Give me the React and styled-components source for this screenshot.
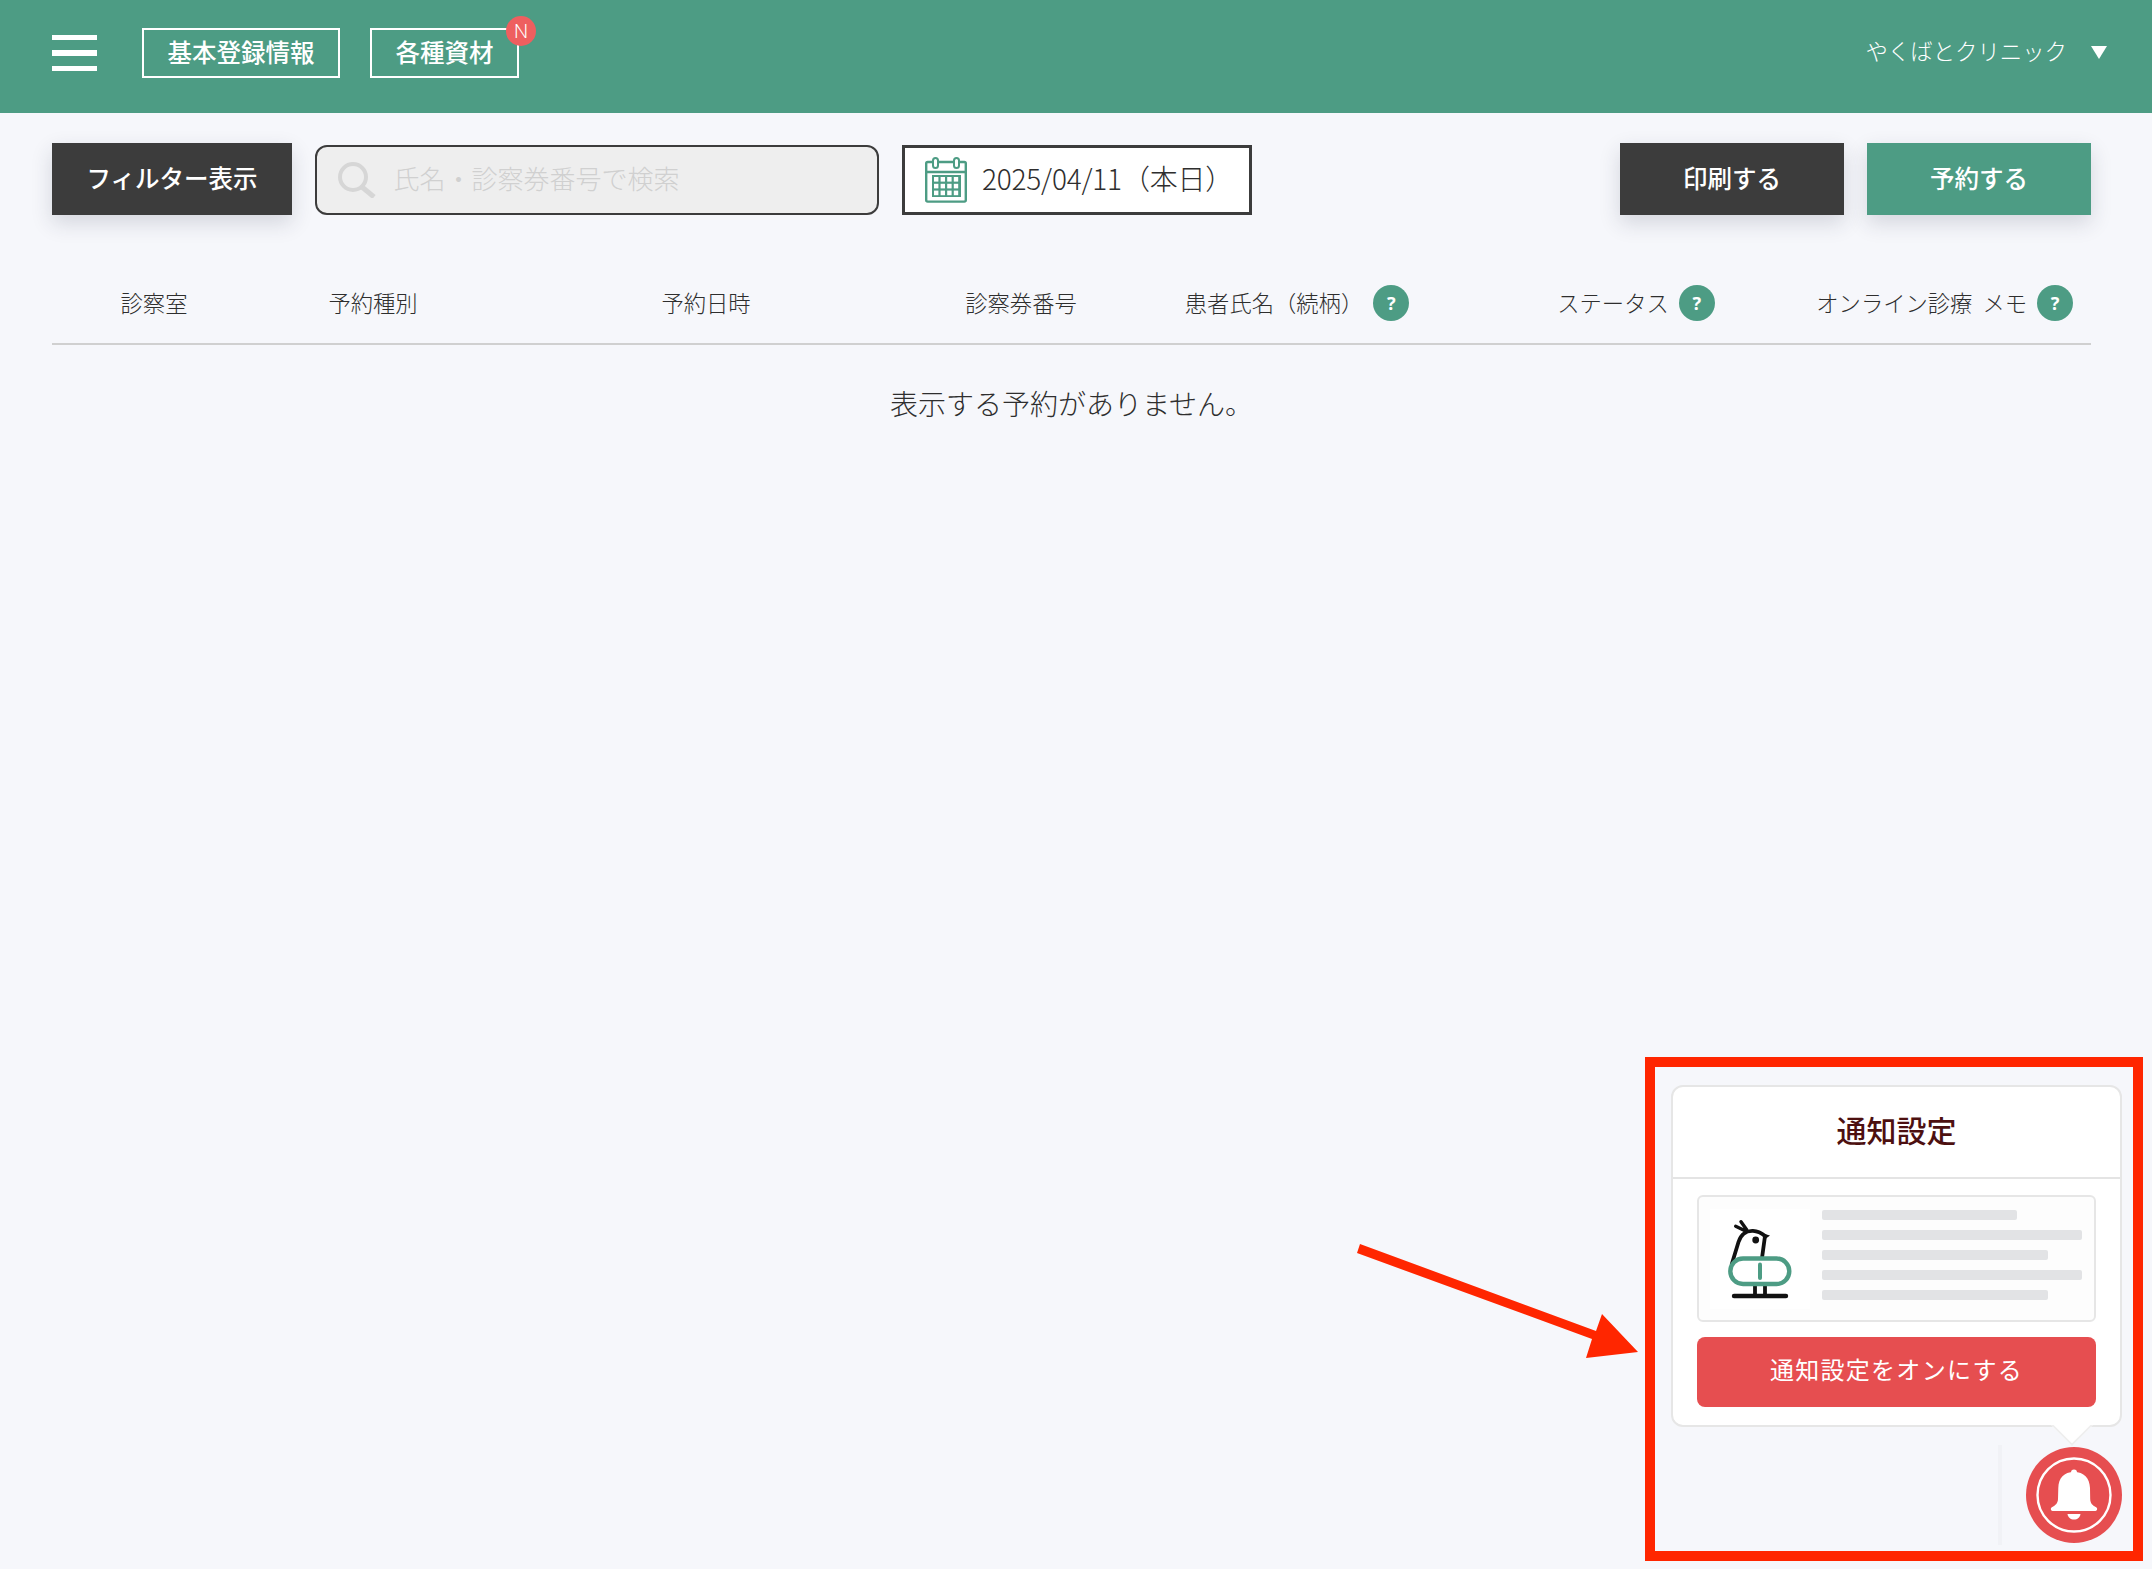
import React from 'react'
import styled, { createGlobalStyle } from 'styled-components'

const GREEN = '#4d9c84'
const DARK = '#3c3c3c'
const INK = '#2e2e2e'
const RED = '#e64e50'

const GlobalStyle = createGlobalStyle`
  * { box-sizing: border-box; }
  html, body { margin: 0; padding: 0; }
  body {
    background: #f6f7fb;
    color: ${INK};
    font-family: "Noto Sans CJK JP", "Noto Sans", sans-serif;
  }
`

const Page = styled.div`
  position: relative;
  min-height: 1569px;
  overflow: hidden;
`

const Header = styled.header`
  display: flex;
  align-items: center;
  height: 113px;
  padding: 0 45px 7px 52px;
  background: ${GREEN};
  color: #fff;
`

const Burger = styled.button`
  display: flex;
  flex-direction: column;
  gap: 10px;
  width: 45px;
  margin-right: 45px;
  padding: 0;
  border: 0;
  background: none;
  span {
    display: block;
    height: 5.5px;
    background: #fff;
  }
`

const NavButton = styled.button`
  position: relative;
  height: 50px;
  margin-right: 30px;
  padding: 0 23.5px 3px;
  border: 2px solid #fff;
  background: none;
  color: #fff;
  font: 500 24.5px "Noto Sans CJK JP", sans-serif;
`

const NewBadge = styled.span`
  position: absolute;
  top: -14px;
  right: -19px;
  width: 30px;
  height: 30px;
  border-radius: 50%;
  background: #ee5f5f;
  color: #fff;
  font: 300 20px/30px "Noto Sans", sans-serif;
  text-align: center;
`

const ClinicMenu = styled.div`
  display: flex;
  align-items: center;
  gap: 24px;
  margin-top: -2px;
  margin-left: auto;
  font-size: 22.4px;
  font-weight: 300;
  line-height: 30px;
`

const ClinicName = styled.span`
  margin-bottom: 4px;
`

const Caret = styled.span`
  width: 0;
  height: 0;
  border-top: 13px solid #fff;
  border-left: 8.5px solid transparent;
  border-right: 8.5px solid transparent;
`

const Toolbar = styled.div`
  display: flex;
  align-items: flex-end;
  height: 102px;
  padding: 0 61px 0 52px;
`

const ActionButton = styled.button`
  width: ${p => p.$width}px;
  height: 72px;
  margin-right: ${p => p.$gap || 0}px;
  padding: 0 0 4px;
  border: 0;
  background: ${p => p.$bg};
  box-shadow: 0 8px 20px rgba(40, 45, 70, 0.16);
  color: #fff;
  font: 500 24.5px "Noto Sans CJK JP", sans-serif;
`

const SearchBox = styled.label`
  display: flex;
  align-items: center;
  gap: 16.5px;
  width: 564px;
  height: 70px;
  margin-right: 23px;
  padding: 0 20px;
  border: 2.5px solid ${DARK};
  border-radius: 12px;
  background: #eeeeee;
`

const SearchInput = styled.input`
  flex: 1;
  min-width: 0;
  margin-bottom: 5px;
  padding: 0;
  border: 0;
  outline: 0;
  background: none;
  font: 300 26px "Noto Sans CJK JP", sans-serif;
  &::placeholder { color: #d0d0d0; opacity: 1; }
`

const DateBox = styled.div`
  display: flex;
  align-items: center;
  gap: 15px;
  width: 350px;
  height: 70px;
  padding: 0 0 0 20px;
  border: 3px solid ${DARK};
  background: #fff;
  font-size: 28px;
  font-weight: 300;
`

const DateText = styled.span`
  margin-bottom: 5px;
  letter-spacing: -0.2px;
`

const ToolbarRight = styled.div`
  display: flex;
  margin-left: auto;
`

const TableHead = styled.div`
  display: grid;
  grid-template-columns: 204px 234px 432px 198px 354px 324px 293px;
  align-items: center;
  height: 130px;
  margin: 0 61px 0 52px;
  padding-top: 70px;
  padding-bottom: 22px;
  border-bottom: 2px solid #d0d0d0;
  font-size: 22.3px;
  font-weight: 300;
`

const HeadCell = styled.div`
  display: flex;
  align-items: center;
  justify-content: ${p => (p.$end ? 'flex-end' : 'center')};
  gap: 10px;
  padding-right: ${p => (p.$end ? 18 : 0)}px;
  white-space: nowrap;
`

const HeadLabel = styled.span`
  margin-bottom: 3px;
  line-height: 32px;
`

const HelpDot = styled.span`
  flex: none;
  width: 36px;
  height: 36px;
  border-radius: 50%;
  background: ${GREEN};
  color: #fff;
  font: 700 18px/36px "Noto Sans", sans-serif;
  text-align: center;
`

const EmptyMessage = styled.p`
  margin: 40px 61px 0 52px;
  font-size: 28px;
  font-weight: 300;
  line-height: 36px;
  text-align: center;
`

/* notification panel floating over the page */
const Dock = styled.div`
  position: absolute;
  right: 30px;
  bottom: 24px;
  display: flex;
  flex-direction: column;
  align-items: flex-end;
  gap: 18px;
  width: 451px;
`

const Card = styled.section`
  position: relative;
  width: 100%;
  height: 342px;
  padding-bottom: 20px;
  border: 2px solid #e6e6e6;
  border-radius: 12px;
  background: #fff;
  &::after {
    content: '';
    position: absolute;
    right: 33px;
    bottom: -15px;
    width: 28px;
    height: 28px;
    background: #fff;
    border-right: 2px solid #eeeeee;
    border-bottom: 2px solid #eeeeee;
    transform: rotate(45deg);
    clip-path: polygon(100% 0, 100% 100%, 0 100%);
  }
`

const CardTitle = styled.h2`
  height: 92px;
  margin: 0;
  border-bottom: 2px solid #e4e4e4;
  color: #4d1010;
  font-size: 30px;
  font-weight: 500;
  line-height: 84px;
  text-align: center;
`

const CardBody = styled.div`
  display: flex;
  flex-direction: column;
  gap: 15px;
  padding: 16px 24px 0;
`

const Preview = styled.div`
  display: flex;
  align-items: center;
  gap: 12px;
  height: 127px;
  padding: 0 11px;
  border: 2px solid #e6e6e6;
  border-radius: 6px;
  background: #fdfdfd;
`

const LogoBox = styled.div`
  flex: none;
  width: 100px;
  height: 100px;
  background: #fff;
`

const PreviewLines = styled.div`
  display: flex;
  flex-direction: column;
  gap: 10px;
  flex: 1;
  margin-top: -7px;
`

const PreviewLine = styled.div`
  width: ${p => p.$width}px;
  height: 10px;
  border-radius: 2px;
  background: #e2e3e5;
`

const EnableButton = styled.button`
  height: 70px;
  padding: 0 0 8px;
  border: 0;
  border-radius: 8px;
  background: ${RED};
  color: #fff;
  font: 400 24px "Noto Sans CJK JP", sans-serif;
  letter-spacing: 1.3px;
`

const BellRow = styled.div`
  display: flex;
  align-items: center;
  gap: 24px;
`

const FaintRule = styled.div`
  width: 4px;
  height: 100px;
  background: #f1f2f6;
`

const BellButton = styled.button`
  display: block;
  width: 96px;
  height: 96px;
  padding: 0;
  border: 0;
  border-radius: 50%;
  background: ${RED};
  svg { display: block; }
`

/* annotation drawn on top of the screenshot */
const RedFrame = styled.div`
  position: absolute;
  left: 1645px;
  top: 1057px;
  width: 498px;
  height: 504px;
  border: 10px solid #ff2600;
  pointer-events: none;
`

const ArrowMark = styled.svg`
  position: absolute;
  left: 1340px;
  top: 1220px;
`

const SearchIcon = () => (
  <svg width="40" height="36" viewBox="0 0 40 36" fill="none" stroke="#d6d6d6" strokeWidth="4">
    <circle cx="16" cy="15" r="13" />
    <path d="M25 25 L37 35" strokeWidth="5" />
  </svg>
)

const CalendarIcon = () => {
  const cells = []
  for (let r = 0; r < 3; r++) {
    for (let c = 0; c < 4; c++) {
      cells.push(<rect key={`${r}-${c}`} x={9 + c * 6.6} y={20 + r * 6.8} width="4.4" height="4.6" fill="#fff" />)
    }
  }
  return (
    <svg width="42" height="46" viewBox="0 0 42 46" style={{ flex: 'none' }}>
      <rect x="1.2" y="5" width="39.6" height="39.6" rx="1.5" fill="#fff" stroke={GREEN} strokeWidth="2.4" />
      <path d="M1 15 H41" stroke={GREEN} strokeWidth="2.4" />
      <rect x="8" y="1" width="5" height="10" rx="2.5" fill="#fff" stroke={GREEN} strokeWidth="2" />
      <rect x="29" y="1" width="5" height="10" rx="2.5" fill="#fff" stroke={GREEN} strokeWidth="2" />
      <rect x="7" y="18" width="29" height="22" fill={GREEN} />
      {cells}
    </svg>
  )
}

const BirdLogo = () => (
  <svg width="100" height="100" viewBox="0 0 100 100" fill="none">
    <path d="M25.7 17.3 L35 21.7 M31 12.7 L36.7 20.7" stroke="#111" strokeWidth="3.4" strokeLinecap="round" />
    <path d="M21.5 56 L28.5 33 C31 25 37 21.5 43 21.8 C48 22 51.5 24 55 27 L52 49" stroke="#111" strokeWidth="3.8" />
    <path d="M53 24.5 L60 26.5 L54 31 Z" fill="#111" />
    <circle cx="45.7" cy="31" r="3.4" fill="#111" />
    <path d="M45 75 V86 M55 75 V86" stroke="#111" strokeWidth="3.8" />
    <path d="M24 87 H76" stroke="#111" strokeWidth="4.4" strokeLinecap="round" />
    <rect x="20.3" y="49.5" width="59" height="25.5" rx="12.75" fill="#fff" stroke={GREEN} strokeWidth="4.4" />
    <path d="M50 55.5 V69" stroke={GREEN} strokeWidth="4" strokeLinecap="round" />
  </svg>
)

const BellIcon = () => (
  <svg width="96" height="96" viewBox="0 0 96 96">
    <circle cx="48" cy="48" r="36.5" fill="none" stroke="#fff" strokeWidth="2.4" />
    <circle cx="48" cy="25.5" r="3" fill="#fff" />
    <path
      d="M48 25 C38 25 32.5 31 32.3 41 L32 52 C31.8 56 30 57.5 28 59 L25.5 60.6 C24.3 61.5 24.8 64 26.5 64 H69.5 C71.2 64 71.7 61.5 70.5 60.6 L68 59 C66 57.5 64.4 56 64.2 52 L64 41 C63.6 31 58 25 48 25 Z"
      fill="#fff"
    />
    <path d="M41.5 67 H54.5 C54 70.5 51.5 72.5 48 72.5 C44.5 72.5 42 70.5 41.5 67 Z" fill="#fff" />
  </svg>
)

const previewLines = [195, 260, 226, 260, 226]

export default function App() {
  return (
    <Page>
      <GlobalStyle />
      <Header>
        <Burger aria-label="メニュー">
          <span />
          <span />
          <span />
        </Burger>
        <NavButton>基本登録情報</NavButton>
        <NavButton>
          各種資材
          <NewBadge>N</NewBadge>
        </NavButton>
        <ClinicMenu>
          <ClinicName>やくばとクリニック</ClinicName>
          <Caret />
        </ClinicMenu>
      </Header>

      <Toolbar>
        <ActionButton $width={240} $gap={23} $bg={DARK}>フィルター表示</ActionButton>
        <SearchBox>
          <SearchIcon />
          <SearchInput placeholder="氏名・診察券番号で検索" />
        </SearchBox>
        <DateBox>
          <CalendarIcon />
          <DateText>2025/04/11（本日）</DateText>
        </DateBox>
        <ToolbarRight>
          <ActionButton $width={224} $gap={23} $bg={DARK}>印刷する</ActionButton>
          <ActionButton $width={224} $bg={GREEN}>予約する</ActionButton>
        </ToolbarRight>
      </Toolbar>

      <TableHead>
        <HeadCell><HeadLabel>診察室</HeadLabel></HeadCell>
        <HeadCell><HeadLabel>予約種別</HeadLabel></HeadCell>
        <HeadCell><HeadLabel>予約日時</HeadLabel></HeadCell>
        <HeadCell><HeadLabel>診察券番号</HeadLabel></HeadCell>
        <HeadCell><HeadLabel>患者氏名（続柄）</HeadLabel><HelpDot>?</HelpDot></HeadCell>
        <HeadCell><HeadLabel>ステータス</HeadLabel><HelpDot>?</HelpDot></HeadCell>
        <HeadCell $end>
          <HeadLabel>オンライン診療</HeadLabel>
          <HeadLabel>メモ</HeadLabel>
          <HelpDot>?</HelpDot>
        </HeadCell>
      </TableHead>

      <EmptyMessage>表示する予約がありません。</EmptyMessage>

      <Dock>
        <Card>
          <CardTitle>通知設定</CardTitle>
          <CardBody>
            <Preview>
              <LogoBox><BirdLogo /></LogoBox>
              <PreviewLines>
                {previewLines.map((w, i) => <PreviewLine key={i} $width={w} />)}
              </PreviewLines>
            </Preview>
            <EnableButton>通知設定をオンにする</EnableButton>
          </CardBody>
        </Card>
        <BellRow>
          <FaintRule />
          <BellButton aria-label="通知"><BellIcon /></BellButton>
        </BellRow>
      </Dock>

      <RedFrame />
      <ArrowMark width="320" height="170" viewBox="0 0 320 170">
        <polygon points="20,24 17,33 252,119 246,138 298,132 262,94 256,111" fill="#ff2600" />
      </ArrowMark>
    </Page>
  )
}
